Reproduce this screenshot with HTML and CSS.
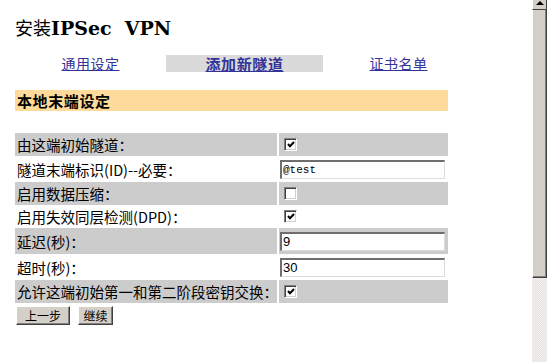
FILE: index.html
```html
<!DOCTYPE html>
<html lang="zh-CN">

<head>
    <meta charset="UTF-8">
    <title>安装IPSec VPN</title>
    <link rel="stylesheet" href="styles.css">
</head>

<body>
    <div class="screen">
        <div class="page">
            <h1 class="title"><span class="title-cjk">安装</span>IPSec&nbsp;&nbsp;VPN</h1>

            <div class="tabs">
                <div class="tab"><a href="#">通用设定</a></div>
                <div class="tab tab-active"><a href="#">添加新隧道</a></div>
                <div class="tab"><a href="#">证书名单</a></div>
            </div>

            <div class="section-head">本地末端设定</div>

            <table class="settings">
                <colgroup>
                    <col class="col-label">
                    <col class="col-field">
                </colgroup>
                <tr class="shade">
                    <td class="label">由这端初始隧道：</td>
                    <td class="field"><span class="check"><svg width="8" height="7" viewBox="0 0 8 7"><polyline points="1,3 3,5.3 7,1" fill="none" stroke="#000" stroke-width="2"/></svg></span></td>
                </tr>
                <tr class="tall">
                    <td class="label">隧道末端标识(ID)--必要：</td>
                    <td class="field"><input class="text-input mono" type="text" value="@test"></td>
                </tr>
                <tr class="shade">
                    <td class="label">启用数据压缩：</td>
                    <td class="field"><span class="check"></span></td>
                </tr>
                <tr>
                    <td class="label">启用失效同层检测(DPD)：</td>
                    <td class="field"><span class="check"><svg width="8" height="7" viewBox="0 0 8 7"><polyline points="1,3 3,5.3 7,1" fill="none" stroke="#000" stroke-width="2"/></svg></span></td>
                </tr>
                <tr class="shade tall">
                    <td class="label">延迟(秒)：</td>
                    <td class="field"><input class="text-input" type="text" value="9"></td>
                </tr>
                <tr class="tall">
                    <td class="label">超时(秒)：</td>
                    <td class="field"><input class="text-input" type="text" value="30"></td>
                </tr>
                <tr class="shade">
                    <td class="label">允许这端初始第一和第二阶段密钥交换：</td>
                    <td class="field"><span class="check"><svg width="8" height="7" viewBox="0 0 8 7"><polyline points="1,3 3,5.3 7,1" fill="none" stroke="#000" stroke-width="2"/></svg></span></td>
                </tr>
            </table>

            <div class="actions">
                <button class="btn btn-back" type="button">上一步</button>
                <button class="btn btn-next" type="button">继续</button>
            </div>
        </div>

        <div class="scrollbar">
            <div class="scroll-up"><span class="arrow"></span></div>
            <div class="scroll-thumb"></div>
            <div class="scroll-track"></div>
        </div>
    </div>
</body>

</html>
```

FILE: styles.css
```css
html,
body {
    margin: 0;
    background: #fff;
}

body {
    font-family: "Noto Sans CJK SC", sans-serif;
    color: #000;
    overflow: hidden;
}

.screen {
    display: flex;
    height: 362px;
}

.page {
    width: 517px;
    padding: 14px 0 0 15px;
}

/* title */
.title {
    margin: 0;
    height: 26px;
    line-height: 26px;
    font: bold 19px "DejaVu Serif", "Noto Sans CJK SC", serif;
    white-space: nowrap;
}

.title-cjk {
    font-family: "Noto Sans CJK SC", sans-serif;
    font-weight: normal;
    font-size: 18px;
}

/* tabs */
.tabs {
    display: grid;
    grid-template-columns: 151px 157px 151px;
    margin-top: 15px;
    height: 17px;
    line-height: 17px;
    font-size: 14px;
    letter-spacing: 0.5px;
    text-align: center;
}

.tab a {
    color: #333399;
    text-decoration: underline;
}

.tab-active {
    background: #dadada;
    font-weight: bold;
    font-size: 15px;
    letter-spacing: 0.6px;
}

/* section header */
.section-head {
    box-sizing: border-box;
    width: 433px;
    height: 21px;
    margin-top: 18px;
    padding-left: 2px;
    line-height: 21px;
    background: #fedb9b;
    font-size: 15px;
    font-weight: bold;
    letter-spacing: 0.6px;
}

/* settings table */
.settings {
    width: 433px;
    margin-top: 22px;
    table-layout: fixed;
    border-collapse: separate;
    border-spacing: 0;
    font-size: 14.5px;
}

.col-label {
    width: 262px;
}

.col-field {
    width: 171px;
}

.settings td {
    box-sizing: border-box;
    height: 23px;
    padding: 0;
    vertical-align: middle;
    white-space: nowrap;
}

.settings .tall td {
    height: 26px;
}

.settings .label {
    padding-left: 2px;
}

.settings .field {
    border-left: 2px solid #fff;
    padding-left: 1px;
}

.shade td {
    background: #cccccc;
}

.check {
    display: flex;
    align-items: center;
    justify-content: center;
    box-sizing: border-box;
    width: 13px;
    height: 13px;
    margin-left: 4px;
    background: #fff;
    border: 1px solid;
    border-color: #808080 #fff #fff #808080;
    box-shadow: inset 1px 1px #404040, inset -1px -1px #d4d0c8;
}

.text-input {
    display: block;
    box-sizing: border-box;
    width: 165px;
    height: 19px;
    padding: 0 1px;
    border-style: solid;
    border-width: 2px 1px 1px 2px;
    border-color: #6e6e6e #dcdcdc #dcdcdc #6e6e6e;
    background: #fff;
    font: 13px "Liberation Sans", sans-serif;
    color: #000;
    outline: none;
}

.text-input.mono {
    font: 11px "Liberation Mono", monospace;
}

/* buttons */
.actions {
    display: flex;
    gap: 8px;
    margin-top: 3px;
    padding-left: 1px;
}

.btn {
    box-sizing: border-box;
    height: 19px;
    padding: 0;
    line-height: 15px;
    background: #d4d0c8;
    border: 1px solid;
    border-color: #fff #404040 #404040 #fff;
    box-shadow: inset -1px -1px #808080;
    font: 12px "Noto Sans CJK SC", sans-serif;
    color: #000;
}

.btn-back {
    width: 54px;
}

.btn-next {
    width: 35px;
}

/* scrollbar */
.scrollbar {
    display: flex;
    flex-direction: column;
    width: 15px;
}

.scroll-up {
    box-sizing: border-box;
    height: 10px;
    display: flex;
    justify-content: center;
    background: #d4d0c8;
    border-left: 1px solid #fff;
    border-right: 1px solid #404040;
    border-bottom: 1px solid #404040;
}

.arrow {
    width: 0;
    height: 0;
    margin-top: 1px;
    border-left: 4px solid transparent;
    border-right: 4px solid transparent;
    border-bottom: 4px solid #000;
}

.scroll-thumb {
    box-sizing: border-box;
    height: 268px;
    background: #d4d0c8;
    border-left: 1px solid #fff;
    border-right: 1px solid #404040;
    border-bottom: 1px solid #404040;
    box-shadow: inset -1px -1px #808080;
}

.scroll-track {
    flex: 1;
    background: repeating-conic-gradient(#e4e2dd 0 25%, #f4f3f1 0 50%) 0 0 / 2px 2px;
}
```
